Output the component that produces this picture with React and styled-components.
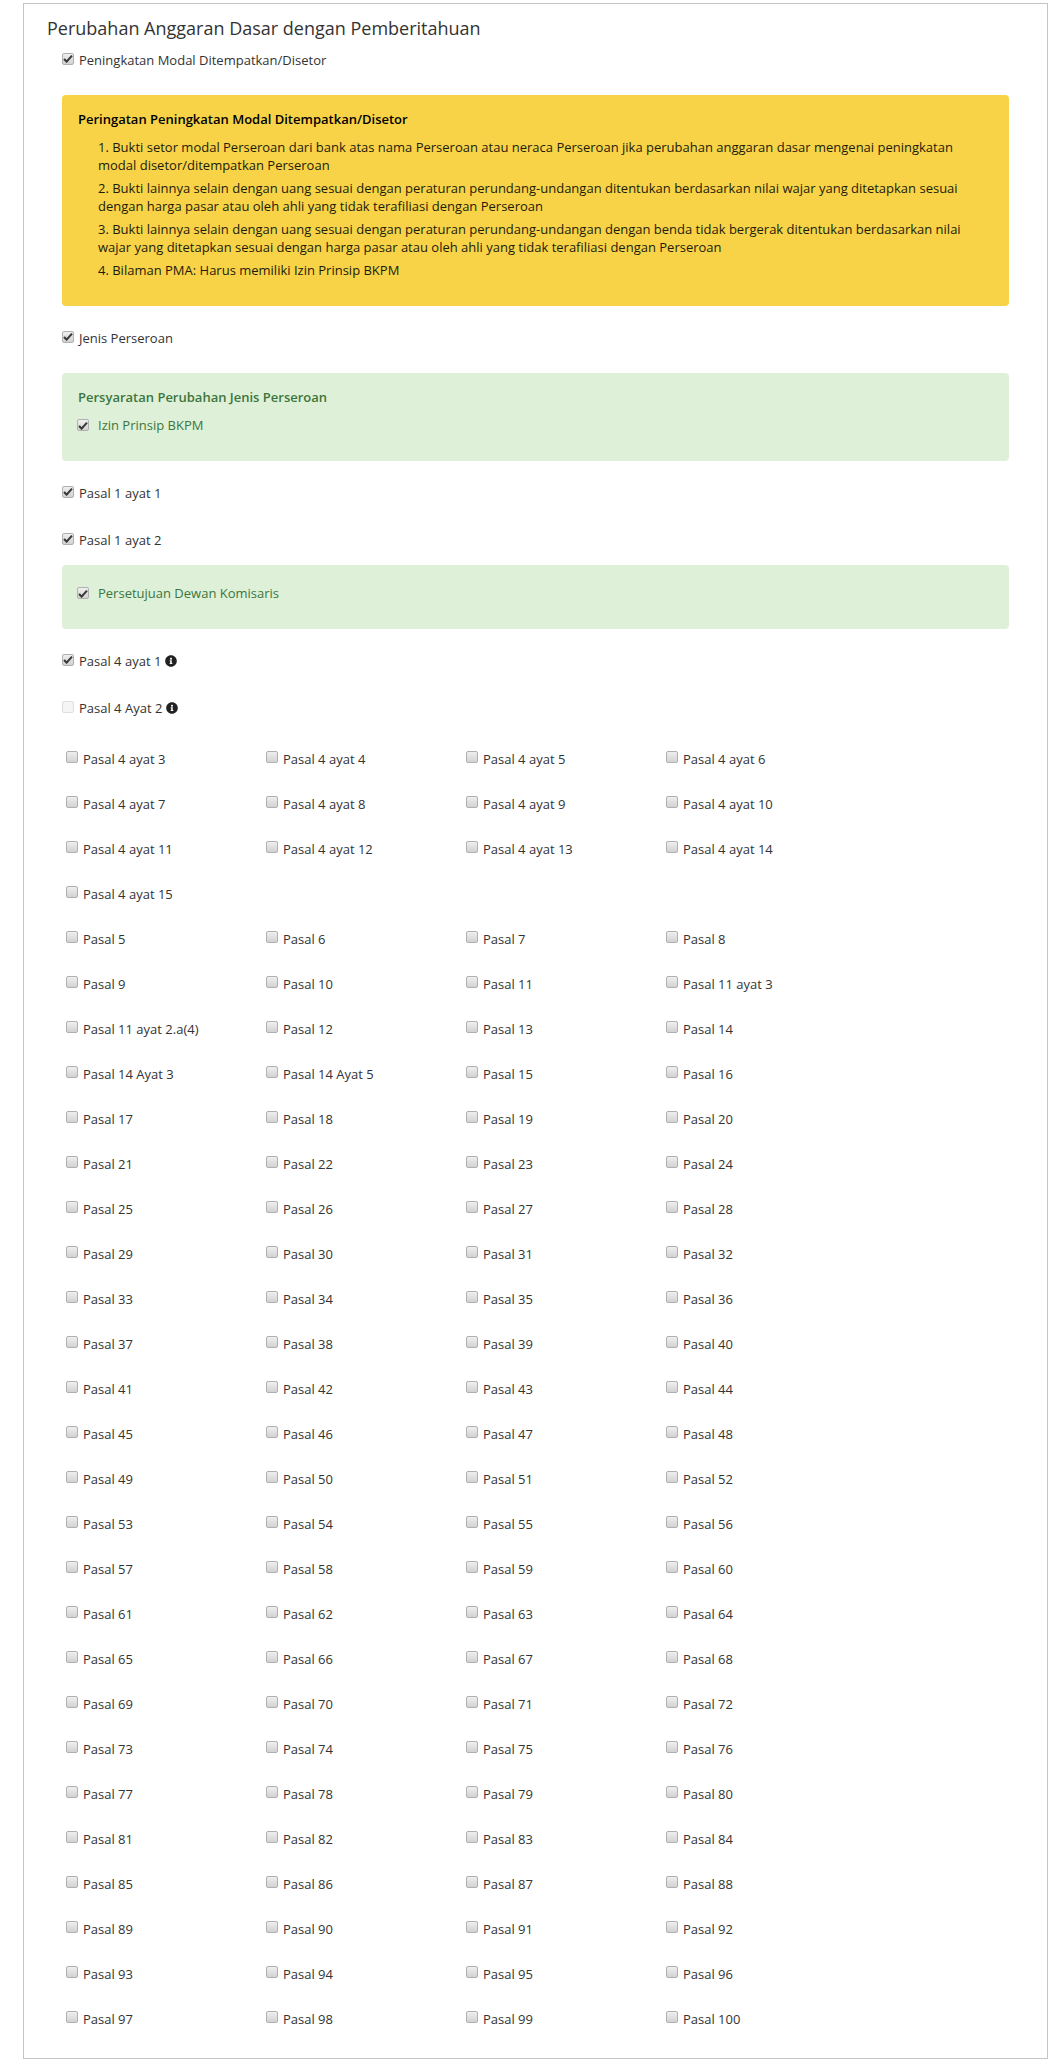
import React from 'react'
import styled, { createGlobalStyle } from 'styled-components'
import { FaInfoCircle } from 'react-icons/fa'

const GlobalStyle = createGlobalStyle`
    body {
        margin: 0;
        background: #fff;
        font-family: "Open Sans", "Liberation Sans", sans-serif;
        font-size: 13px;
        color: #333;
    }
`

const warnings = [
    '1. Bukti setor modal Perseroan dari bank atas nama Perseroan atau neraca Perseroan jika perubahan anggaran dasar mengenai peningkatan modal disetor/ditempatkan Perseroan',
    '2. Bukti lainnya selain dengan uang sesuai dengan peraturan perundang-undangan ditentukan berdasarkan nilai wajar yang ditetapkan sesuai dengan harga pasar atau oleh ahli yang tidak terafiliasi dengan Perseroan',
    '3. Bukti lainnya selain dengan uang sesuai dengan peraturan perundang-undangan dengan benda tidak bergerak ditentukan berdasarkan nilai wajar yang ditetapkan sesuai dengan harga pasar atau oleh ahli yang tidak terafiliasi dengan Perseroan',
    '4. Bilaman PMA: Harus memiliki Izin Prinsip BKPM',
]

const pasalList = []
for (let i = 3; i <= 15; i++) pasalList.push(`Pasal 4 ayat ${i}`)
for (let i = 5; i <= 100; i++) {
    pasalList.push(`Pasal ${i}`)
    if (i === 11) pasalList.push('Pasal 11 ayat 3', 'Pasal 11 ayat 2.a(4)')
    if (i === 14) pasalList.push('Pasal 14 Ayat 3', 'Pasal 14 Ayat 5')
}

function Check({ checked, faded }) {
    return (
        <CheckBox $checked={checked} $faded={faded}>
            {checked && (
                <svg width="10" height="9" viewBox="0 0 10 9">
                    <path d="M1 5 L3.6 7.6 L9 1.6" fill="none" stroke="#3a3a3a" strokeWidth="2.1" />
                </svg>
            )}
        </CheckBox>
    )
}

function App() {
    return (
        <>
            <GlobalStyle />
            <Panel>
                <Title>Perubahan Anggaran Dasar dengan Pemberitahuan</Title>
                <CheckRow $top={12}>
                    <Check checked />
                    <Label>Peningkatan Modal Ditempatkan/Disetor</Label>
                </CheckRow>

                <WarningBox>
                    <BoxTitle>Peringatan Peningkatan Modal Ditempatkan/Disetor</BoxTitle>
                    {warnings.map((text) => (
                        <WarningItem key={text}>{text}</WarningItem>
                    ))}
                </WarningBox>

                <CheckRow $top={23}>
                    <Check checked />
                    <Label>Jenis Perseroan</Label>
                </CheckRow>

                <SuccessBox $height={88}>
                    <SuccessTitle>Persyaratan Perubahan Jenis Perseroan</SuccessTitle>
                    <SuccessRow>
                        <Check checked />
                        <SuccessLabel>Izin Prinsip BKPM</SuccessLabel>
                    </SuccessRow>
                </SuccessBox>

                <CheckRow $top={23}>
                    <Check checked />
                    <Label>Pasal 1 ayat 1</Label>
                </CheckRow>
                <CheckRow $top={29}>
                    <Check checked />
                    <Label>Pasal 1 ayat 2</Label>
                </CheckRow>

                <SuccessBox $height={64} $top={16}>
                    <SuccessRow $first>
                        <Check checked />
                        <SuccessLabel>Persetujuan Dewan Komisaris</SuccessLabel>
                    </SuccessRow>
                </SuccessBox>

                <CheckRow $top={23}>
                    <Check checked />
                    <Label>Pasal 4 ayat 1</Label>
                    <InfoIcon />
                </CheckRow>
                <CheckRow $top={29}>
                    <Check faded />
                    <Label>Pasal 4 Ayat 2</Label>
                    <InfoIcon />
                </CheckRow>

                <PasalGrid>
                    {pasalList.map((name) => (
                        <GridItem key={name} $newRow={name === 'Pasal 5'}>
                            <Check />
                            <Label>{name}</Label>
                        </GridItem>
                    ))}
                </PasalGrid>
            </Panel>
        </>
    )
}

export default App

const Panel = styled.div`
    box-sizing: border-box;
    width: 1025px;
    height: 2056px;
    margin: 3px 0 0 23px;
    padding: 0 38px;
    border: 1px solid #c4c4c4;
`

const Title = styled.h3`
    box-sizing: border-box;
    height: 35px;
    margin: 0 0 0 -15px;
    padding-top: 13px;
    font-size: 18px;
    line-height: 22px;
    font-weight: 400;
    color: #333;
`

const CheckBox = styled.span`
    box-sizing: border-box;
    flex: none;
    display: inline-flex;
    align-items: center;
    justify-content: center;
    width: 12px;
    height: 12px;
    margin-top: -3px;
    border: 1px solid ${(p) => (p.$faded ? '#dedede' : '#b0b0b0')};
    border-radius: 2px;
    background: ${(p) => (p.$faded ? '#f5f5f5' : 'linear-gradient(#efefef, #d2d2d2)')};
`

const Label = styled.span`
    margin-left: 5px;
    line-height: 18px;
    white-space: nowrap;
`

const CheckRow = styled.div`
    display: flex;
    align-items: center;
    height: 18px;
    margin-top: ${(p) => p.$top}px;
`

const InfoIcon = styled(FaInfoCircle)`
    width: 12px;
    height: 12px;
    margin-left: 4px;
    color: #222;
`

const WarningBox = styled.div`
    box-sizing: border-box;
    height: 211px;
    margin-top: 26px;
    padding: 15px 34px 0 15px;
    background: #f8d347;
    border-radius: 4px;
    color: #1c1c0c;
`

const BoxTitle = styled.h4`
    margin: 0 0 10px;
    padding-left: 1px;
    font-size: 13px;
    line-height: 18px;
    font-weight: 600;
    color: #000;
`

const WarningItem = styled.p`
    margin: 0 0 5px 21px;
    line-height: 18px;
`

const SuccessBox = styled.div`
    box-sizing: border-box;
    height: ${(p) => p.$height}px;
    margin-top: ${(p) => p.$top || 26}px;
    padding: 15px 15px 0;
    background: #dff0d8;
    border-radius: 4px;
    color: #3c763d;
`

const SuccessTitle = styled(BoxTitle)`
    margin-bottom: 10px;
    color: #3c763d;
`

const SuccessRow = styled.div`
    display: flex;
    align-items: center;
    height: 18px;
    margin-top: ${(p) => (p.$first ? 4 : 0)}px;

    ${CheckBox} {
        margin-top: 0;
    }
`

const SuccessLabel = styled(Label)`
    margin-left: 9px;
`

const PasalGrid = styled.div`
    display: grid;
    grid-template-columns: repeat(4, 200px);
    grid-auto-rows: 45px;
    margin-top: 33px;
    padding-left: 4px;
`

const GridItem = styled.div`
    display: flex;
    align-items: flex-start;
    grid-column-start: ${(p) => (p.$newRow ? 1 : 'auto')};

    ${CheckBox} {
        margin-top: 1px;
    }
`
